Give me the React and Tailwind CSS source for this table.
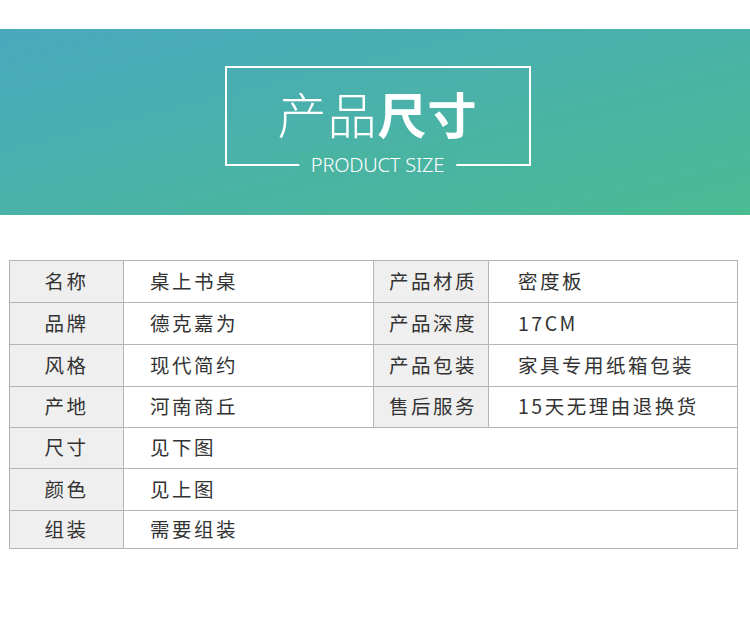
const rows = [
  ['名称', '桌上书桌', '产品材质', '密度板'],
  ['品牌', '德克嘉为', '产品深度', '17CM'],
  ['风格', '现代简约', '产品包装', '家具专用纸箱包装'],
  ['产地', '河南商丘', '售后服务', '15天无理由退换货'],
  ['尺寸', '见下图'],
  ['颜色', '见上图'],
  ['组装', '需要组装'],
]

const heights = ['h-[42px]', 'h-[42px]', 'h-[42px]', 'h-[41px]', 'h-[41px]', 'h-[42px]', 'h-[38px]']

const cjk = "font-['Noto_Sans_CJK_SC',sans-serif]"

export default function App() {
  return (
    <div className={`w-[750px] h-[617px] bg-white ${cjk}`}>
      <div className="h-[29px]" />

      {/* Banner */}
      <div className="h-[186px] bg-gradient-to-br from-[#4aa8bd] to-[#4bbb92] flex justify-center pt-[37px]">
        <div className="relative ml-[5px] w-[306px] h-[100px] border-2 border-white flex justify-center">
          <div className="mt-[17px] text-[49px] leading-[56px] text-white tracking-[1px]">
            <span className="font-light">产品</span>
            <span className="font-bold">尺寸</span>
          </div>
          <div className="absolute left-1/2 -translate-x-1/2 bottom-[-14px] px-[12px] bg-[#4ab4a2] font-['Noto_Sans',sans-serif] font-light text-[20px] leading-[26px] text-white tracking-[-0.2px] whitespace-nowrap">
            PRODUCT SIZE
          </div>
        </div>
      </div>

      <div className="h-[45px]" />

      {/* Spec table */}
      <div className="px-[9px]">
        <table className="w-[729px] border-collapse text-[19.5px] text-[#333] tracking-[2.5px]">
          <colgroup>
            <col className="w-[114px]" />
            <col className="w-[250px]" />
            <col className="w-[115px]" />
            <col />
          </colgroup>
          <tbody>
            {rows.map((r, i) => (
              <tr key={i} className={heights[i]}>
                <td className="border border-[#b4b4b4] bg-[#efefef] text-center p-0 pb-[2px]">{r[0]}</td>
                {r.length === 4 ? (
                  <>
                    <td className="border border-[#b4b4b4] p-0 pl-[26px] pb-[2px]">{r[1]}</td>
                    <td className="border border-[#b4b4b4] bg-[#efefef] text-center p-0 pl-[4px] pb-[2px]">{r[2]}</td>
                    <td className="border border-[#b4b4b4] p-0 pl-[29px] pb-[2px]">{r[3]}</td>
                  </>
                ) : (
                  <td colSpan={3} className="border border-[#b4b4b4] p-0 pl-[26px] pb-[2px]">{r[1]}</td>
                )}
              </tr>
            ))}
          </tbody>
        </table>
      </div>
    </div>
  )
}
